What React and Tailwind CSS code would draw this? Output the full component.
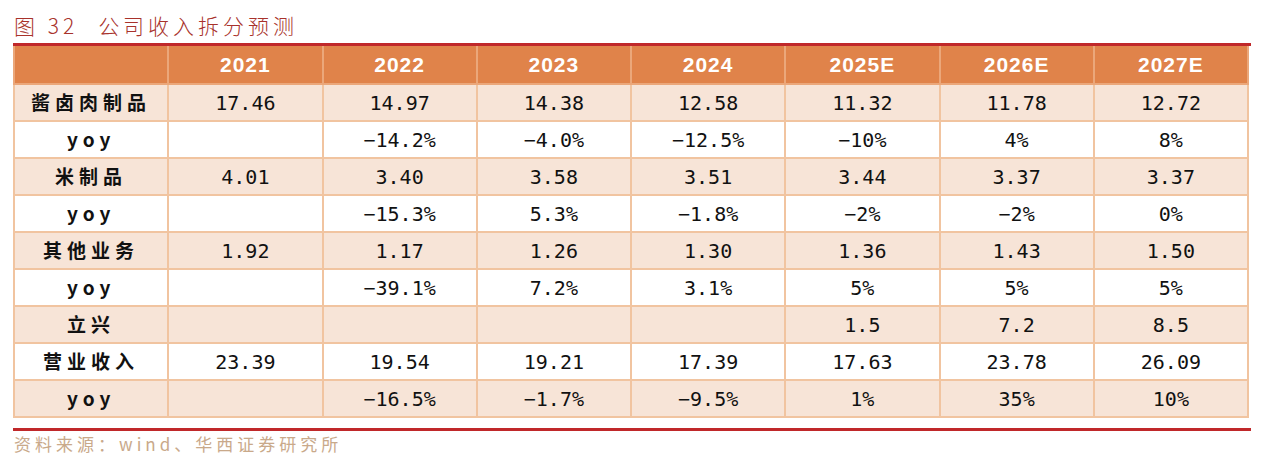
const header = ["2021", "2022", "2023", "2024", "2025E", "2026E", "2027E"];

const rows = [
  ["酱卤肉制品", ["17.46", "14.97", "14.38", "12.58", "11.32", "11.78", "12.72"]],
  ["yoy", ["", "−14.2%", "−4.0%", "−12.5%", "−10%", "4%", "8%"]],
  ["米制品", ["4.01", "3.40", "3.58", "3.51", "3.44", "3.37", "3.37"]],
  ["yoy", ["", "−15.3%", "5.3%", "−1.8%", "−2%", "−2%", "0%"]],
  ["其他业务", ["1.92", "1.17", "1.26", "1.30", "1.36", "1.43", "1.50"]],
  ["yoy", ["", "−39.1%", "7.2%", "3.1%", "5%", "5%", "5%"]],
  ["立兴", ["", "", "", "", "1.5", "7.2", "8.5"]],
  ["营业收入", ["23.39", "19.54", "19.21", "17.39", "17.63", "23.78", "26.09"]],
  ["yoy", ["", "−16.5%", "−1.7%", "−9.5%", "1%", "35%", "10%"]],
];

export default function App() {
  return (
    <div className="w-[1269px] h-[471px] bg-white overflow-hidden">
      {/* 标题 */}
      <div
        className="pt-[12px] pl-[14px] h-[38px] leading-[26px] text-[21px] text-[#a8322b] font-light tracking-[4px]"
        style={{ fontFamily: '"Noto Sans CJK SC", sans-serif' }}
      >
        图 32<span className="ml-[20px]">公司收入拆分预测</span>
      </div>
      <div className="ml-[13px] mt-[5px] w-[1238px] h-[3px] bg-[#c0282a]" />

      {/* 表格 */}
      <table className="ml-[13px] w-[1236px] table-fixed border-collapse">
        <thead>
          <tr className="bg-[#e0834a] h-[38px]">
            <th className="border-2 border-t-0 border-[#eba77a]" />
            {header.map((h) => (
              <th
                key={h}
                className="border-2 border-t-0 border-[#eba77a] text-white text-[21px] font-bold tracking-[1px]"
                style={{ fontFamily: '"Liberation Sans", Arial, sans-serif' }}
              >
                {h}
              </th>
            ))}
          </tr>
        </thead>
        <tbody>
          {rows.map(([label, vals], i) => (
            <tr key={i} className={`h-[37px] ${i % 2 === 0 ? "bg-[#f7e4d7]" : "bg-white"}`}>
              <td
                className="border-2 border-[#f1c4a0] text-center text-[19px] font-bold tracking-[5px] text-[#111]"
                style={{ fontFamily: '"Noto Sans CJK SC", "Liberation Sans", sans-serif' }}
              >
                {label}
              </td>
              {vals.map((v, j) => (
                <td
                  key={j}
                  className="border-2 border-[#f1c4a0] text-center text-[20px] text-[#111]"
                  style={{ fontFamily: '"DejaVu Sans Mono", monospace' }}
                >
                  {v}
                </td>
              ))}
            </tr>
          ))}
        </tbody>
      </table>

      <div className="ml-[13px] mt-[10px] w-[1238px] h-[3px] bg-[#c0282a]" />
      <div
        className="pl-[14px] mt-[2px] leading-[22px] text-[17px] text-[#c9a98a] tracking-[4px]"
        style={{ fontFamily: '"Noto Sans CJK SC", sans-serif' }}
      >
        资料来源：wind、华西证券研究所
      </div>
    </div>
  );
}
